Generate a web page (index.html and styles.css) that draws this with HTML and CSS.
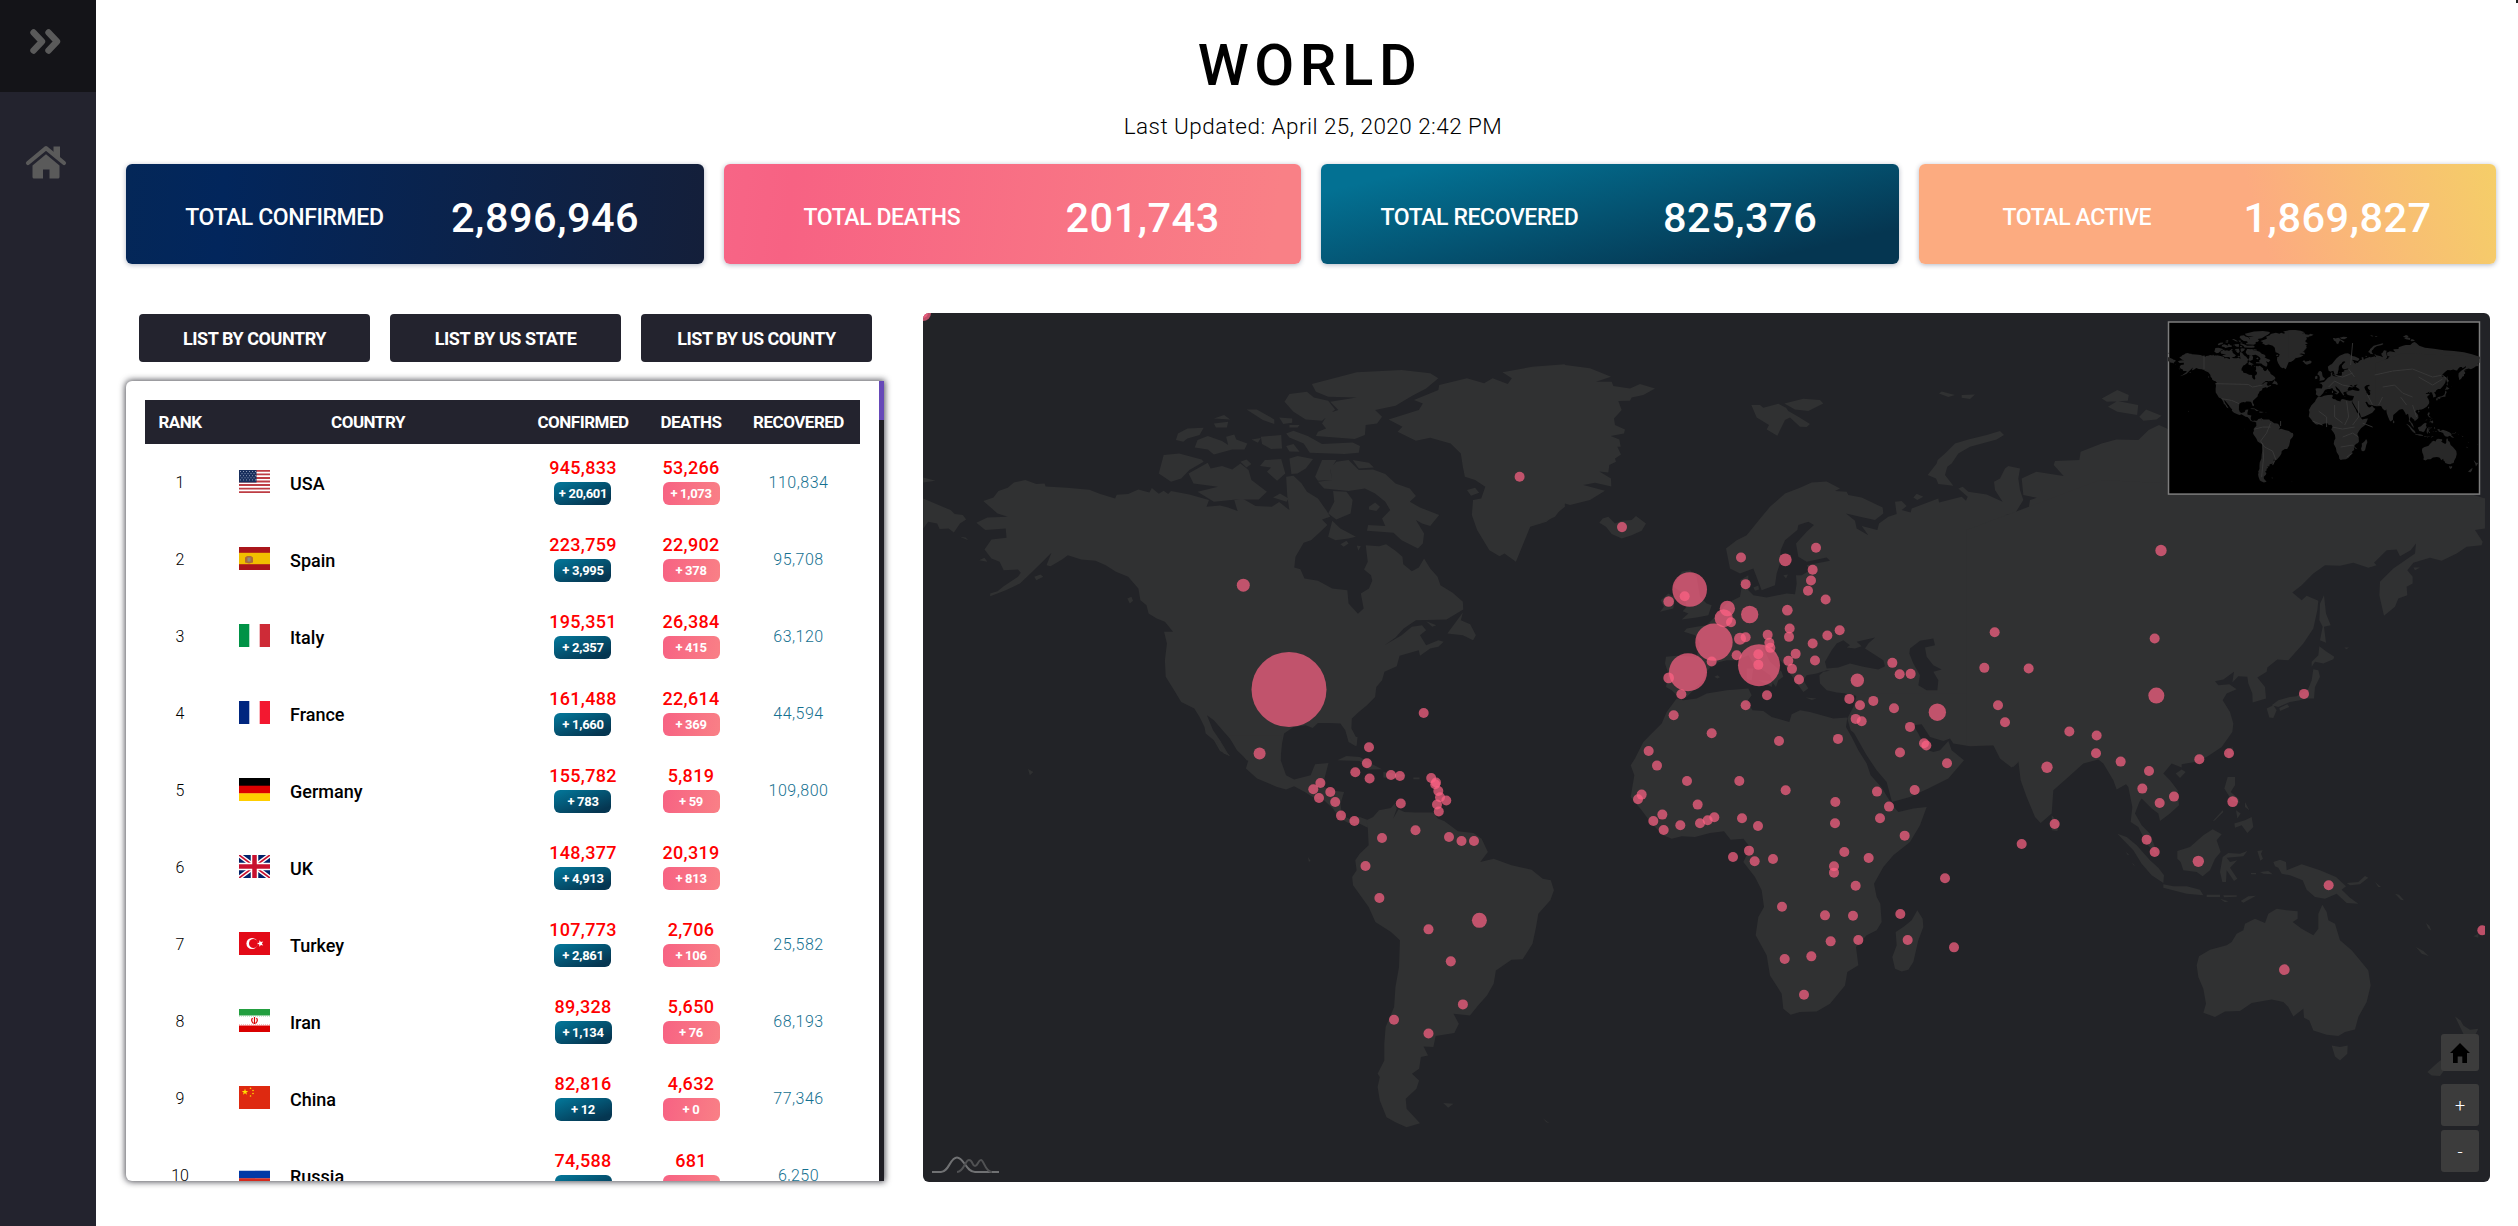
FILE: index.html
```html
<!DOCTYPE html>
<html lang="en">
<head>
<meta charset="utf-8">
<title>World</title>
<link rel="stylesheet" href="styles.css">
</head>
<body>
<svg class="defs" width="0" height="0">
  <symbol id="flag-us" viewBox="0 0 31 23"><path fill="#fff" d="M0 0h31v23H0z"/><path stroke="#bd3d44" stroke-width="1.77" d="M0 .9h31M0 4.4h31M0 8h31M0 11.5h31M0 15h31M0 18.6h31M0 22.1h31"/><path fill="#192f5d" d="M0 0h17.500v12.400H0z"/><path stroke="#8d99b5" stroke-width="1" stroke-dasharray="1 2" d="M1 1.500h16M2.500 3.600h14M1 5.700h16M2.500 7.800h14M1 9.900h16"/></symbol>
  <symbol id="flag-es" viewBox="0 0 31 23"><path fill="#aa151b" d="M0 0h31v23H0z"/><path fill="#f1bf00" d="M0 5.800h31v11.400H0z"/><path fill="#ad6a3a" d="M6 15.500v-5l2-1.500h4l2 1.500v5l-4 1z"/><path fill="#8f8a80" d="M8.500 10.500h3v4h-3z"/></symbol>
  <symbol id="flag-it" viewBox="0 0 31 23"><path fill="#fff" d="M0 0h31v23H0z"/><path fill="#009246" d="M0 0h10.300v23H0z"/><path fill="#ce2b37" d="M20.700 0H31v23H20.700z"/></symbol>
  <symbol id="flag-fr" viewBox="0 0 31 23"><path fill="#fff" d="M0 0h31v23H0z"/><path fill="#00267f" d="M0 0h10.300v23H0z"/><path fill="#f31830" d="M20.700 0H31v23H20.700z"/></symbol>
  <symbol id="flag-de" viewBox="0 0 31 23"><path d="M0 0h31v8H0z"/><path fill="#d00" d="M0 7.700h31v8H0z"/><path fill="#ffce00" d="M0 15.300h31V23H0z"/></symbol>
  <symbol id="flag-gb" viewBox="0 0 31 23"><path fill="#012169" d="M0 0h31v23H0z"/><path stroke="#fff" stroke-width="4.500" d="M0 0l31 23M31 0L0 23"/><path stroke="#c8102e" stroke-width="1.700" d="M0 0l31 23M31 0L0 23"/><path stroke="#fff" stroke-width="7.500" d="M15.500 0v23M0 11.500h31"/><path stroke="#c8102e" stroke-width="4.500" d="M15.500 0v23M0 11.500h31"/></symbol>
  <symbol id="flag-tr" viewBox="0 0 31 23"><path fill="#e30a17" d="M0 0h31v23H0z"/><circle cx="13" cy="11.500" r="5.600" fill="#fff"/><circle cx="14.500" cy="11.500" r="4.500" fill="#e30a17"/><path fill="#fff" d="M18 11.500l2.300-.9.100-2.400 1.500 1.900 2.300-.6-1.300 2 1.300 2-2.300-.6-1.500 1.900-.1-2.400z"/></symbol>
  <symbol id="flag-ir" viewBox="0 0 31 23"><path fill="#fff" d="M0 0h31v23H0z"/><path fill="#239f40" d="M0 0h31v6.500H0z"/><path fill="#da0000" d="M0 16.500h31V23H0z"/><path stroke="#8fcb9c" stroke-dasharray="1 1" d="M0 7h31"/><path stroke="#ec7f7f" stroke-dasharray="1 1" d="M0 16h31"/><path fill="none" stroke="#da0000" stroke-width="1.200" d="M15.500 8v7M13.500 9q-2 3 1 5.500M17.500 9q2 3-1 5.500"/></symbol>
  <symbol id="flag-cn" viewBox="0 0 31 23"><path fill="#de2910" d="M0 0h31v23H0z"/><path fill="#ffde00" d="M6 2.500l.8 2.400h2.500l-2 1.500.8 2.400-2.100-1.500-2.100 1.500.8-2.400-2-1.500h2.500z"/><g fill="#ffde00"><circle cx="11.500" cy="2.200" r=".8"/><circle cx="14" cy="4.500" r=".8"/><circle cx="14" cy="7.500" r=".8"/><circle cx="11.500" cy="10" r=".8"/></g></symbol>
  <symbol id="flag-ru" viewBox="0 0 31 23"><path fill="#fff" d="M0 0h31v23H0z"/><path fill="#0039a6" d="M0 7.700h31v7.700H0z"/><path fill="#d52b1e" d="M0 15.300h31V23H0z"/></symbol>
</svg>

<div class="app">
  <nav class="sidebar">
    <a class="sidebar-toggle"><svg width="34" height="27" viewBox="0 0 34 27"><path fill="none" stroke="#5a5a5a" stroke-width="6.400" stroke-linecap="round" stroke-linejoin="round" d="M4.500 4.500l8.500 9-8.500 9M19.500 4.500l8.500 9-8.500 9"/></svg></a>
    <a class="sidebar-home"><svg width="42" height="34" viewBox="0 0 42 34"><path fill="none" stroke="#5a5a5a" stroke-width="4.200" stroke-linecap="round" stroke-linejoin="round" d="M3 18L21 3.200 39 18"/><path fill="#5a5a5a" d="M28.500 1.500H35v14l-6.500-5.500zM21 9.200L34.500 20.500V32q0 1.500-1.500 1.500h-8.500v-9h-6.500v9H9q-1.500 0-1.500-1.500V20.500z"/></svg></a>
  </nav>

  <main class="content">
    <h1 class="title">WORLD</h1>
    <p class="updated">Last Updated: April 25, 2020 2:42 PM</p>

    <section class="stats">
      <div class="stat stat-confirmed"><span class="stat-label">TOTAL CONFIRMED</span><span class="stat-value">2,896,946</span></div>
      <div class="stat stat-deaths"><span class="stat-label">TOTAL DEATHS</span><span class="stat-value">201,743</span></div>
      <div class="stat stat-recovered"><span class="stat-label">TOTAL RECOVERED</span><span class="stat-value">825,376</span></div>
      <div class="stat stat-active"><span class="stat-label">TOTAL ACTIVE</span><span class="stat-value">1,869,827</span></div>
    </section>

    <section class="panels">
      <div class="list-panel">
        <div class="tabs">
          <button class="tab">LIST BY COUNTRY</button>
          <button class="tab">LIST BY US STATE</button>
          <button class="tab">LIST BY US COUNTY</button>
        </div>
        <div class="list-card">
          <div class="list">
            <div class="row head"><span>RANK</span><span>COUNTRY</span><span>CONFIRMED</span><span>DEATHS</span><span>RECOVERED</span></div>
            <div class="row"><span class="rank">1</span><span class="country"><svg class="flag"><use href="#flag-us"/></svg>USA</span><span class="count">945,833<b class="badge up">+ 20,601</b></span><span class="count">53,266<b class="badge dead">+ 1,073</b></span><span class="recovered">110,834</span></div>
            <div class="row"><span class="rank">2</span><span class="country"><svg class="flag"><use href="#flag-es"/></svg>Spain</span><span class="count">223,759<b class="badge up">+ 3,995</b></span><span class="count">22,902<b class="badge dead">+ 378</b></span><span class="recovered">95,708</span></div>
            <div class="row"><span class="rank">3</span><span class="country"><svg class="flag"><use href="#flag-it"/></svg>Italy</span><span class="count">195,351<b class="badge up">+ 2,357</b></span><span class="count">26,384<b class="badge dead">+ 415</b></span><span class="recovered">63,120</span></div>
            <div class="row"><span class="rank">4</span><span class="country"><svg class="flag"><use href="#flag-fr"/></svg>France</span><span class="count">161,488<b class="badge up">+ 1,660</b></span><span class="count">22,614<b class="badge dead">+ 369</b></span><span class="recovered">44,594</span></div>
            <div class="row"><span class="rank">5</span><span class="country"><svg class="flag"><use href="#flag-de"/></svg>Germany</span><span class="count">155,782<b class="badge up">+ 783</b></span><span class="count">5,819<b class="badge dead">+ 59</b></span><span class="recovered">109,800</span></div>
            <div class="row"><span class="rank">6</span><span class="country"><svg class="flag"><use href="#flag-gb"/></svg>UK</span><span class="count">148,377<b class="badge up">+ 4,913</b></span><span class="count">20,319<b class="badge dead">+ 813</b></span><span class="recovered"></span></div>
            <div class="row"><span class="rank">7</span><span class="country"><svg class="flag"><use href="#flag-tr"/></svg>Turkey</span><span class="count">107,773<b class="badge up">+ 2,861</b></span><span class="count">2,706<b class="badge dead">+ 106</b></span><span class="recovered">25,582</span></div>
            <div class="row"><span class="rank">8</span><span class="country"><svg class="flag"><use href="#flag-ir"/></svg>Iran</span><span class="count">89,328<b class="badge up">+ 1,134</b></span><span class="count">5,650<b class="badge dead">+ 76</b></span><span class="recovered">68,193</span></div>
            <div class="row"><span class="rank">9</span><span class="country"><svg class="flag"><use href="#flag-cn"/></svg>China</span><span class="count">82,816<b class="badge up">+ 12</b></span><span class="count">4,632<b class="badge dead">+ 0</b></span><span class="recovered">77,346</span></div>
            <div class="row"><span class="rank">10</span><span class="country"><svg class="flag"><use href="#flag-ru"/></svg>Russia</span><span class="count">74,588<b class="badge up"></b></span><span class="count">681<b class="badge dead"></b></span><span class="recovered">6,250</span></div>
          </div>
          <div class="scrollbar"><div class="thumb"></div></div>
        </div>
      </div>

      <div class="map">
        <svg class="world" viewBox="923 313 1567 868.500" preserveAspectRatio="none">
          <defs>
            <clipPath id="frame"><path d="M923 313h1562v869H923z"/></clipPath>
            <clipPath id="inset"><path d="M2168 322h312v172h-312z"/></clipPath>
            <g id="land">
              <!-- Arctic islands above Siberia -->
              <g transform="translate(1700 0) scale(.52168 .33333)"><path d="M770 1195L800 1170 822 1185 820 1202 780 1205ZM782 1220L800 1203 840 1215 838 1245 800 1235ZM842 1250L855 1228 885 1247 875 1258 850 1262Z"/></g>
              <!-- North America and western Greenland -->
              <g transform="translate(920 310) scale(.40816 .33333)">
                <path d="M155 573L180 562 192 543 215 533 230 517 258 510 285 522 305 520 308 529 360 533 415 539 440 551 478 565 482 554 510 552 535 538 562 547 568 534 585 551 597 542 608 552 615 543 660 553 708 570 702 590 735 586 755 592 778 603 770 570 790 565 822 588 862 590 880 576 905 600 900 560 897 500 915 497 935 520 948 545 975 565 995 600 1005 620 985 628 998 645 975 672 958 690 940 698 920 740 917 772 932 777 942 805 975 812 1010 835 1047 840 1050 880 1073 911 1087 895 1080 850 1100 835 1108 812 1105 795 1088 778 1097 755 1092 705 1125 708 1142 702 1165 722 1182 740 1184 762 1205 783 1222 772 1235 745 1250 775 1268 800 1275 825 1305 848 1330 875 1331 898 1290 928 1215 930 1185 955 1165 982 1138 1005 1180 975 1205 950 1230 945 1240 960 1225 975 1240 1005 1270 990 1283 995 1270 1010 1250 1015 1225 1037 1222 1020 1175 1037 1168 1068 1138 1085 1132 1110 1118 1130 1115 1160 1095 1185 1075 1205 1058 1225 1057 1255 1070 1285 1068 1308 1050 1295 1042 1260 1030 1240 1000 1238 975 1238 962 1253 945 1245 915 1250 892 1270 887 1300 883 1350 800 1350 770 1300 745 1265 720 1230 703 1215 718 1260 735 1290 758 1337 735 1322 720 1290 700 1270 697 1250 685 1220 672 1195 640 1175 620 1135 602 1100 600 1050 605 1000 598 965 620 965 600 935 580 925 560 910 555 885 540 870 535 835 510 800 480 785 455 765 430 752 395 748 362 735 348 748 320 768 310 765 322 728 300 755 275 785 245 820 210 840 172 858 172 850 190 843 205 828 240 800 247 788 240 778 205 780 195 755 175 745 158 718 175 688 212 683 210 655 160 660 138 638 165 622 215 620 190 610Z"/>
                <path d="M1330 907L1325 930 1348 942 1362 975 1355 990 1330 975 1292 970ZM1240 933L1265 945 1255 950ZM975 515L1010 510 1005 475 1020 455 1050 450 1075 480 1110 478 1140 492 1165 520 1200 535 1215 558 1200 575 1225 592 1272 615 1250 648 1230 640 1215 630 1235 670 1232 700 1220 715 1180 690 1160 668 1095 662 1098 645 1140 648 1132 625 1152 600 1140 575 1115 550 1090 535 1050 543 990 535ZM1012 543L1045 545 1060 570 1055 610 1020 628 1000 610 1015 575ZM1010 632L1030 655 1068 680 1050 685 1018 690 1000 680ZM1030 702L1045 692 1050 700 1038 710ZM1070 706L1080 708 1074 722ZM1100 590L1115 577 1127 590 1118 603 1100 598ZM1060 450L1100 458 1112 472 1075 475ZM968 500L985 450 1020 450 1005 480 1010 510 975 512ZM658 490L705 458 712 475 740 468 765 478 785 460 805 480 812 510 850 545 830 568 775 568 720 575 680 545 730 530 670 520ZM597 435L635 430 690 448 695 455 660 480 640 505 615 515 585 490ZM627 390L632 370 655 355 695 353 685 375 655 385 645 395ZM673 412L680 390 705 378 740 393 755 405 750 380 770 373 775 388 802 400 795 418 765 418 720 433 705 418ZM720 325L745 315 760 328ZM720 340L755 335 752 352 725 352ZM800 298L825 298 868 328 868 342 840 330ZM880 322L912 325 912 338 890 342ZM905 345h25l-5 7h-20ZM835 380L885 375 887 415 860 417 838 402ZM812 388L835 384 828 398ZM897 370L915 362 950 378 985 402 1060 397 1078 408 1075 428 1040 432 955 428 940 400 905 382ZM897 408L915 402 930 425 905 424ZM845 450L885 447 895 490 875 512 850 485 860 472 833 468ZM785 455L800 448 812 462 800 472ZM905 445L925 438 963 447 945 475 925 490 910 492ZM865 562L882 550 903 565 898 575ZM893 275L905 252 948 245 965 262 1000 272 1017 298 985 332 945 328 915 305ZM960 222L1070 187 1180 180 1250 190 1270 205 1240 235 1205 258 1165 287 1115 300 1132 320 1120 340 1092 345 1090 375 1065 387 970 378 975 365 995 355 985 340 1000 310 1025 300 1005 275 1070 262 1000 260 970 245ZM280 800L295 793 302 800 285 810ZM98 680L112 682 118 690ZM8 565L75 600 85 612 105 615 113 628 98 640 83 667 70 655 48 657 42 640 20 635 8 655ZM8 502L38 512 8 517ZM145 750L158 743 165 755ZM508 865L518 860 522 872 514 880Z"/>
                <path d="M1580 163L1500 170 1427 187 1450 205 1440 222 1403 205 1382 220 1340 205 1272 225 1270 240 1210 270 1232 280 1222 300 1148 328 1182 350 1170 365 1215 392 1250 383 1300 400 1325 430 1330 470 1335 500 1360 510 1385 530 1375 565 1355 570 1352 615 1365 660 1395 720 1420 738 1432 730 1460 755 1475 710 1495 650 1535 635 1580 590ZM1340 540L1360 533 1370 548 1350 557Z"/>
              </g>
              <!-- Central and South America -->
              <g transform="translate(920 740) scale(.44643 .33333)">
                <path d="M690-15L710 30 735 62 730 85 755 115 800 140 820 148 838 138 862 155 885 175 905 180 925 205 940 235 960 248 985 250 1003 262 1005 240 985 230 965 238 945 225 942 190 950 155 920 150 905 140 905 120 915 68 885 72 875 105 838 118 820 105 808 60 810-15ZM662 0L672 0 680 25 695 48 680 40ZM962-10h18l-2 28zM935 60L955 47 985 50 1010 70 1035 87 1005 88 985 62ZM1038 95L1090 105 1060 115 1038 112ZM1105 112h14v5h-14z"/>
                <path d="M1003 262L1000 240 1015 230 1028 210 1055 203 1063 190 1068 205 1060 235 1072 207 1085 215 1110 217 1150 217 1160 235 1175 243 1205 273 1240 278 1258 295 1272 335 1255 365 1285 355 1325 375 1370 388 1395 415 1413 420 1420 450 1412 480 1385 520 1380 560 1372 610 1350 657 1325 658 1290 690 1285 730 1270 765 1250 795 1232 825 1195 820 1207 850 1197 878 1155 887 1150 920 1128 918 1138 945 1122 950 1118 985 1102 1000 1118 1020 1112 1045 1088 1075 1090 1105 1120 1148 1090 1160 1065 1145 1045 1130 1030 1080 1025 1040 1030 1010 1025 1000 1040 960 1040 910 1043 860 1062 800 1065 740 1073 680 1075 600 1055 575 1020 545 1005 500 970 435 968 410 978 390 975 360 985 340 1005 315ZM1172 1088L1195 1090 1183 1102ZM242 86L254 95 246 105ZM1395 1133L1410 1148 1403 1145ZM869 350l6 12-4 2z"/>
              </g>
              <!-- Europe, northern Asia, eastern Greenland -->
              <g transform="translate(1540 310) scale(.33333)">
                <path d="M-30 173L0 170 70 164 150 175 180 187 213 200 168 215 215 215 220 228 270 235 300 222 345 235 310 255 275 262 270 272 235 273 245 300 222 325 225 345 255 358 252 370 212 378 238 388 242 410 232 410 243 433 225 445 228 455 208 465 205 487 178 484 213 505 214 529 165 518 130 525 195 542 150 570 90 585 75 580 45 620 0 640-30 645ZM178 638L188 625 205 620 225 640 245 632 275 630 288 618 318 640 305 662 275 675 245 685 215 672 198 650ZM634 285L660 285 670 293 715 281 738 293 745 303 775 320 810 342 800 351 780 350 750 322 735 330 712 377 680 358 687 345 650 322ZM733 280L790 266 840 270 850 280 805 303 765 298ZM1197 250L1205 244 1245 255 1225 261ZM1265 255L1305 253 1290 267 1265 263ZM1193 450L1215 430 1245 400 1285 388 1340 375 1380 363 1392 375 1370 388 1290 410 1255 430 1235 460 1222 470 1215 495 1240 527 1195 522 1188 505 1163 495 1190 460ZM1120 562L1130 551 1150 560 1132 570Z"/>
                <path d="M425 785L450 780 470 800 480 860 500 880 515 885 505 915 470 922 425 928 445 910 428 903 440 890 430 850 400 830ZM385 850L405 862 400 895 360 905 372 890 362 870ZM655 1110L700 1112 695 1130ZM620 1075L640 1075 635 1110 620 1108ZM797 1162L830 1165 815 1169ZM915 1150l25-5-12 14zM523 1100l10-5 7 6-8 4zM640 832l15-6 2 12-12 4zM730 795l14-2-6 12z"/>
                <path d="M558 715L590 690 620 675 665 620 690 590 735 550 780 533 815 517 860 514 900 535 885 543 920 545 925 555 965 562 1028 592 1030 610 1005 630 960 620 918 610 945 632 950 655 985 675 965 648 1012 660 1017 640 1045 620 1070 612 1065 575 1085 573 1100 588 1085 600 1112 607 1115 595 1195 565 1197 577 1265 560 1278 572 1283 560 1255 535 1268 530 1285 545 1340 553 1388 575 1365 540 1362 515 1380 505 1395 475 1405 468 1440 475 1435 505 1440 540 1450 570 1425 610 1397 615 1425 622 1465 600 1470 570 1490 563 1450 555 1445 505 1489 485 1571 498 1541 465 1545 453 1618 450 1622 425 1685 400 1729 388 1795 390 1826 360 1857 345 1881 355 1930 400 2016 430 2150 445 2300 470 2450 480 2600 500 2720 530 2835 565 2835 600 1900 900 1900 1170 960 1170 945 1155 920 1150 890 1147 860 1140 840 1120 838 1095 850 1085 870 1082 860 1080 830 1090 800 1095 790 1110 805 1135 790 1145 775 1125 750 1090 735 1065 700 1030 685 1015 668 1010 690 1055 725 1085 730 1100 715 1110 708 1130 700 1120 690 1095 640 1060 625 1035 590 1050 560 1050 520 1060 500 1085 490 1110 440 1160 420 1165 395 1140 378 1130 385 1090 375 1060 378 1040 410 1037 470 1040 480 1000 465 975 432 965 440 955 470 950 500 945 530 915 560 880 600 860 605 830 600 810 625 795 625 840 640 855 680 862 740 850 765 852 770 820 768 795 785 795 810 780 800 765 870 752 860 742 800 755 775 740 768 700 800 665 822 645 805 635 775 645 772 660 735 690 722 720 720 760 710 790 705 825 665 840 640 775 600 790 570 775Z"/>
              </g>
              <!-- Africa, Arabia, Madagascar -->
              <g transform="translate(1600 700) scale(.33333)">
                <path d="M230-5L200 35 185 70 155 100 130 125 105 175 92 195 103 225 92 290 125 330 155 370 190 405 215 415 245 408 285 410 330 398 372 393 392 418 430 415 450 440 440 465 430 485 465 530 485 570 492 620 475 650 467 705 500 765 510 825 545 880 550 925 572 943 600 935 650 933 690 910 735 855 742 815 775 795 768 740 800 705 830 690 845 665 841 610 830 590 822 550 850 500 880 465 930 425 960 375 980 320 940 325 895 335 882 320 862 290 845 262 812 225 800 190 775 150 755 110 738 80 742 52 700 55 630 35 600 30 575 42 568 65 515 50 490 32 458 30 440 5 455-15 445-35 380-30 320-20 290-5 250 0Z"/>
                <path d="M742 55L752 90 762 98 800 165 830 210 860 245 876 305 930 290 985 265 1045 235 1092 180 1055 150 1045 122 1020 150 1000 155 985 150 970 130 955 100 940 75 965 72 990 110 1030 122 1050 115 1060 130 1110 138 1180 135 1210 165 1225 175 1215 185 1240 200 1258 183 1290 150 1400 100 1400-20 772-20 760 20ZM952 630L968 655 970 680 955 720 940 785 925 808 905 813 885 805 877 770 890 735 887 695 910 680 935 660Z"/>
              </g>
              <!-- East and South Asia -->
              <g transform="translate(2000 480) scale(.33333)">
                <path d="M-100 150L300 0 1455 55 1455 145 1425 150 1448 185 1445 195 1400 200 1370 220 1325 242 1290 233 1240 248 1222 270 1238 290 1238 310 1220 320 1222 345 1195 355 1185 380 1152 407 1138 345 1140 305 1180 265 1245 220 1248 190 1232 210 1200 228 1190 208 1160 210 1122 248 1130 255 1105 263 1060 248 1020 257 975 255 940 280 905 315 877 337 905 360 920 347 955 362 952 390 940 445 910 490 865 540 832 538 802 562 800 575 772 592 795 620 798 655 758 667 757 640 745 610 742 590 715 588 697 607 702 575 670 598 645 603 655 615 688 612 710 627 680 640 668 660 690 695 700 730 697 755 665 800 620 830 585 845 545 852 545 862 515 850 490 880 510 900 533 930 537 975 510 1000 480 1022 475 1000 455 985 425 955 418 965 405 1000 425 1035 450 1060 465 1100 472 1125 440 1090 415 1040 392 1025 397 980 385 920 378 912 350 928 340 900 310 850 295 838 250 850 205 890 160 930 155 1000 122 1028 105 1010 80 950 62 900 55 842 35 862 0 835-20 795-100 795Z"/>
                <path d="M960 370L972 345 978 400 992 435 972 440 978 488 960 480 968 440 958 420ZM958 498L980 515 1003 530 1000 537 970 550 945 545 935 560 935 545 955 525ZM940 567L955 570 960 590 945 620 942 655 920 655 900 660 870 665 835 680 815 675 835 660 870 650 890 648 925 625 935 600ZM838 683L862 672 868 680 840 692ZM800 685L820 675 830 690 820 713 808 712ZM680 812L698 800 698 825 685 835ZM527 880L545 868 557 875 540 893ZM683 890L705 890 705 915 692 935 715 955 720 970 695 960 673 925ZM735 965L748 990 735 980ZM708 990L722 1000 712 1015ZM703 1030L735 1020 755 1010 760 1040 742 1058 725 1035 705 1042ZM638 1023L668 990 670 995 645 1020ZM155 1005L178 1030 172 1052 155 1050ZM1033 502h14l-8 5zM1240 262h20l-15 8z"/>
              </g>
              <!-- Indonesia and Oceania -->
              <g transform="translate(2030 780) scale(.33333)">
                <path d="M262 160L290 170 320 195 360 240 385 262 402 285 400 308 365 285 335 250 310 210ZM400 312L430 318 470 318 510 328 520 345 470 340 400 322ZM530 343h40v7h-40zM580 345h40v4l-38 2zM570 355l25 8-10 3zM632 362L655 348 678 346 640 367ZM442 212L480 200 520 165 548 147 575 162 560 180 572 215 555 235 540 270 518 288 500 275 460 270 452 245 442 235ZM570 275L578 230 595 218 630 220 652 212 640 228 590 232 600 245 622 240 600 262 622 295 612 302 590 270 588 305 577 305ZM682 212l16-2-5 10 6 15-8 6zM690 275L715 272 728 282 700 280ZM662 278h16v4h-14zM730 245L750 238 768 245 770 270 815 252 870 270 918 290 948 318 935 328 960 352 985 370 950 368 920 340 885 355 855 350 830 328 818 300 780 285 755 280 745 262 735 258ZM950 308L985 305 1005 287 1015 292 990 312 960 315ZM1035 305L1053 320 1045 320ZM1095 340l12 3 15 17-10-2zM1158 500L1180 512 1196 527 1175 520ZM1188 428l10 8 6 15-10-8zM1330 468l15-8v12zM288 215l10 8-6 0zM306 247l10 9-6-2z"/>
                <path d="M507 528L540 508 590 495 605 485 620 460 640 450 645 430 675 415 705 428 715 400 740 385 770 390 803 393 803 415 788 425 815 445 850 465 865 445 865 400 877 373 890 395 895 420 915 430 930 480 965 510 990 540 1015 570 1022 615 1010 665 985 710 975 747 945 755 925 767 890 763 850 750 838 720 822 712 820 685 790 708 775 680 760 665 725 657 665 668 630 692 585 693 555 710 520 697 528 670 520 625 505 590 500 555ZM905 795L930 800 953 795 952 820 930 840 915 828ZM1275 708L1292 720 1300 735 1320 748 1345 745 1335 765 1310 800 1300 760ZM1192 875L1225 845 1260 820 1250 860 1230 887 1205 885Z"/>
              </g>
              <!-- Black Sea and Caspian Sea -->
              <g class="sea" transform="translate(1540 310) scale(.33333)"><path d="M855 1055L875 1020 890 1000 910 990 930 1005 920 1012 945 1015 965 1008 950 995 1005 982 985 1000 975 1015 1030 1050 1035 1068 1015 1078 970 1070 930 1060 895 1072 860 1075ZM1110 1015L1140 992 1180 985 1185 1005 1155 1012 1160 1040 1180 1065 1205 1078 1180 1085 1195 1110 1192 1140 1160 1140 1135 1125 1140 1095 1120 1060 1108 1030Z"/></g>
            </g>
          </defs>
          <g clip-path="url(#frame)">
            <use class="land" href="#land"/>
            <g id="dots" class="dots"></g>
          </g>
          <rect class="inset-box" x="2168.500" y="322" width="311" height="172"/>
          <g clip-path="url(#inset)">
            <g transform="translate(1982.600 257) scale(.2)">
              <use class="land-inset" href="#land"/>
              <path class="borders" d="M1165 633L1328 637 1350 650 1400 640M1107 492V560M1194 708L1246 717 1282 733M1440 830L1420 880 1390 920 1410 950 1450 970 1465 1010 1450 1040M1400 930L1405 1000 1395 1100M1360 860L1400 850 1440 850M1490 845V820M1680 770L1720 800V850M1760 740V800L1800 830M1820 720L1830 800 1810 840M1880 720V800L1850 840M1750 850L1800 860 1860 850M1650 820L1700 840M1800 900L1850 880 1880 900M1790 950L1850 940 1870 960M1820 1000L1850 980M1900 830L1950 850M1730 650L1760 620 1800 640M1760 590L1800 600 1850 580M1800 640L1850 650M1830 560L1860 600M1850 430L1840 540M1960 590L2050 570 2150 560 2250 600 2300 590 2330 620M2000 650L2060 640 2100 680 2150 700M2180 600L2250 640 2300 610M2000 700L1980 740M1920 680L1950 740M2090 700L2120 740M2150 740L2170 800"/>
            </g>
          </g>
          <path class="logo-front" d="M932 1171.500h9c8 0 9-14.500 16-14.500s9 14.500 18 14.500h24"/>
          <path class="logo-back" d="M957 1171.500c7 0 8-12 12-12s3 6 6 6 3-6 6-6 4 12 11 12"/>
        </svg>
        <div class="controls">
          <button class="control home"><svg width="20" height="20" viewBox="0 0 20 20"><path d="M10 0l10 10h-3v10h-4.700v-6.500H7.700V20H3V10H0z"/></svg></button>
          <button class="control zoom">+</button>
          <button class="control zoom">-</button>
        </div>
      </div>
    </section>
  </main>
</div>
<div class="corner"></div>
<script src="script.js"></script>
</body>
</html>
```
FILE: styles.css
```css
* { box-sizing: border-box; }
body { margin: 0; height: 1226px; overflow: hidden; background: #fff; color: #000; font-family: Roboto, "Liberation Sans", sans-serif; }
button { border: 0; padding: 0; font-family: inherit; }
.defs { position: absolute; }
.app { display: flex; height: 1226px; }

.sidebar { width: 96px; flex: none; background: #23232e; }
.sidebar a { display: flex; justify-content: center; }
.sidebar-toggle { height: 92px; padding: 28px 4px 0 0; background: #141418; }
.sidebar-home { padding: 53px 4px 0 0; }

.content { flex: 1; display: flex; flex-direction: column; padding: 0 22px 0 30px; }
.title { margin: 33px 2px 0 0; height: 64px; line-height: 64px; text-align: center; font-size: 58px; font-weight: 500; letter-spacing: 5.600px; }
.updated { margin: 14px -4px 0 0; height: 30px; line-height: 30px; text-align: center; font-size: 22.500px; font-weight: 300; letter-spacing: .45px; }

.stats { display: grid; grid-template-columns: repeat(4, 1fr); gap: 20px; margin-top: 23px; }
.stat { height: 100px; padding: 7px 28px 0; display: grid; grid-template-columns: 1fr 1fr; align-items: center; justify-items: center; border-radius: 6px; color: #fff; box-shadow: 0 1px 5px rgba(0, 20, 60, .3); }
.stat-label { font-size: 23px; font-weight: 500; letter-spacing: -.4px; }
.stat-value { font-size: 41.500px; font-weight: 500; letter-spacing: .5px; }
.stat-confirmed { background: linear-gradient(95deg, #042758 0, #02265c 17%, #141f3a 100%); }
.stat-deaths { background: linear-gradient(97deg, #f76586 0, #f76283 12%, #f98086 95%); }
.stat-recovered { background: linear-gradient(167deg, #037193 12%, #053651 85%); }
.stat-active { background: linear-gradient(74deg, #fcab80 58%, #f5ce68 100%); }

.panels { display: flex; margin-top: 49px; }
.list-panel { width: 758px; flex: none; }
.tabs { display: flex; gap: 20px; padding: 1px 12px 0 13px; }
.tab { flex: 1; height: 48px; border-radius: 4px; background: #23232e; color: #fff; font-size: 18px; font-weight: 700; letter-spacing: -.45px; }
.list-card { display: flex; justify-content: space-between; height: 800px; margin-top: 19px; overflow: hidden; border-radius: 6px 0 0 6px; box-shadow: 0 0 6px 1px rgba(20, 20, 30, .75); }
.list { width: 715px; margin: 19px 0 0 19px; }
.scrollbar { width: 5px; background: #1f1e25; }
.thumb { height: 39px; background: #6649b8; }

.row { display: grid; grid-template-columns: 70px 306px 124px 92px 123px; height: 77px; align-items: center; justify-items: center; }
.head { height: 44px; background: #23232e; color: #fff; font-size: 17px; font-weight: 700; letter-spacing: -.5px; }
.rank { font-size: 16px; font-weight: 300; }
.country { justify-self: start; display: flex; align-items: center; padding: 2px 0 0 24px; font-size: 18px; font-weight: 500; }
.flag { width: 31px; height: 23px; margin: -4px 20px 0 0; }
.count { display: flex; flex-direction: column; align-items: center; align-self: start; padding-top: 13px; line-height: 22px; color: #f00; font-size: 18px; font-weight: 500; letter-spacing: .3px; }
.badge { width: 57px; height: 23px; margin-top: 3px; border-radius: 6px; color: #fff; text-align: center; font-size: 13px; line-height: 24px; letter-spacing: -.3px; }
.up { background: linear-gradient(160deg, #037193 10%, #053651 85%); }
.dead { background: linear-gradient(100deg, #f76283, #f98086); }
.recovered { color: #147090; font-size: 16px; font-weight: 300; letter-spacing: .5px; }

.map { position: relative; width: 1567px; height: 869px; margin-left: 39px; overflow: hidden; border-radius: 6px; background: #222327; }
.world { display: block; width: 1567px; height: 869px; }
.land { fill: #303132; --sea: #222327; }
.land-inset { fill: #282828; --sea: #000; }
.sea { fill: var(--sea); }
.borders { fill: none; stroke: #3c3c3c; stroke-width: 4; }
.dots { fill: #ff6384; fill-opacity: .7; }
.inset-box { fill: #000; stroke: #7d7d7d; stroke-width: 1.500; }
.logo-front, .logo-back { fill: none; stroke: #707173; stroke-width: 2; }
.logo-back { stroke: #505153; }
.controls { position: absolute; right: 11px; bottom: 10px; display: flex; flex-direction: column; gap: 4px; }
.control { width: 38px; height: 42px; border-radius: 3px; background: #3c3c3c; color: #fff; font-size: 18px; font-weight: 300; }
.home { height: 37px; margin-bottom: 9px; display: flex; align-items: center; justify-content: center; }
.corner { position: absolute; top: 0; right: 0; width: 2px; height: 3px; background: #222; }
```
FILE: script.js
```js
// Case markers, grouped by map region: [origin x, origin y, scale, default radius, [x, y, radius?]...]
const regions = [
  [0, 0, 1, 5, [[923, 313, 8], [923, 313, 5], [1519.6, 476.7], [1243.3, 585, 6.5], [1289, 689.3, 37.5], [1423.7, 712.7], [1369, 747], [1259.6, 753.3, 6],
    [1366.9, 763], [1355.3, 772], [1369.6, 778.3], [1391, 774.7], [1399.9, 775.7], [1431.2, 777.7], [1436, 782.3], [1435.2, 784], [1438.3, 790.7], [1440, 797], [1446.3, 800.3], [1437, 804.3], [1438.8, 811.3], [1400.8, 803.3],
    [1320.4, 782.7], [1313.3, 789], [1330.3, 791.7], [1319, 797.7], [1335.2, 801.7], [1341, 815.3], [1354.4, 820.7], [1382, 837.7], [1415.5, 830], [1449, 836.7], [1461.5, 840.7], [1474, 840.7], [1365.5, 865.7], [1379.4, 897.7],
    [1428.5, 929], [1479.4, 920, 7.5], [1450.8, 961], [1462.9, 1004], [1394, 1019.3], [1428.5, 1033]]],
  [1540, 310, 3, 15, [[246, 651], [603, 742], [736, 749, 19], [828, 713], [617, 822], [818, 779], [813, 811], [804, 842], [857, 868], [449, 838, 52], [434, 858], [386, 874, 16], [562, 895, 23], [551, 924, 27], [573, 936], [629, 913, 26], [742, 900, 16],
    [522, 996, 56], [600, 986, 18], [617, 981], [683, 974], [688, 998], [691, 1013], [749, 955], [747, 980], [862, 976], [899, 960], [818, 1000], [825, 1051], [767, 1031], [745, 1052], [756, 1076], [777, 1108], [590, 1035],
    [657, 1065, 63], [655, 1032], [655, 1064], [515, 1054], [444, 1086, 57], [386, 1103, 16], [424, 1152], [401, 1215], [681, 1155], [617, 1185], [515, 1269], [717, 1292], [894, 1286], [952, 1110, 20], [928, 1166], [960, 1185], [1000, 1172],
    [947, 1226], [965, 1233], [1057, 1058], [1079, 1092], [1112, 1091], [1062, 1194], [1192, 1206, 26], [1110, 1250], [1152, 1299], [1159, 1306], [1080, 1327], [1364, 966], [1333, 1073], [1466, 1075], [1374, 1185], [1395, 1236], [326, 1322]]],
  [1600, 700, 3, 15, [[171, 196], [261, 242], [418, 242], [125, 283], [114, 297], [293, 313], [557, 270], [706, 305], [705, 369], [831, 274], [867, 319], [840, 354], [944, 269], [1041, 189], [914, 406], [187, 343], [160, 362], [191, 389], [241, 375],
    [300, 369], [323, 360], [343, 351], [426, 354], [474, 377], [399, 470], [447, 451], [464, 483], [519, 476], [733, 455], [702, 498], [702, 517], [806, 473], [767, 556], [546, 619], [675, 645], [759, 646], [692, 723], [775, 719], [901, 641], [923, 719],
    [1035, 534], [1062, 741], [1265, 431], [554, 776], [634, 768], [612, 883]]],
  [2000, 480, 3, 15, [[483, 211, 17], [464, 475], [469, 646, 24], [912, 641], [208, 754], [290, 766], [288, 819], [362, 844], [141, 861, 17], [447, 872], [427, 925], [522, 949], [479, 968], [598, 837], [687, 819], [698, 964, 16], [164, 1031], [440, 1078], [464, 1115], [595, 1143, 17]]],
  [2030, 780, 3, 15, [[896, 315], [763, 568, 16], [1357, 450]]]
];
const layer = document.getElementById("dots");
for (const [ox, oy, scale, radius, points] of regions) {
  for (const [x, y, r = radius] of points) {
    const dot = document.createElementNS("http://www.w3.org/2000/svg", "circle");
    dot.setAttribute("cx", ox + x / scale);
    dot.setAttribute("cy", oy + y / scale);
    dot.setAttribute("r", r / scale);
    layer.append(dot);
  }
}
```
